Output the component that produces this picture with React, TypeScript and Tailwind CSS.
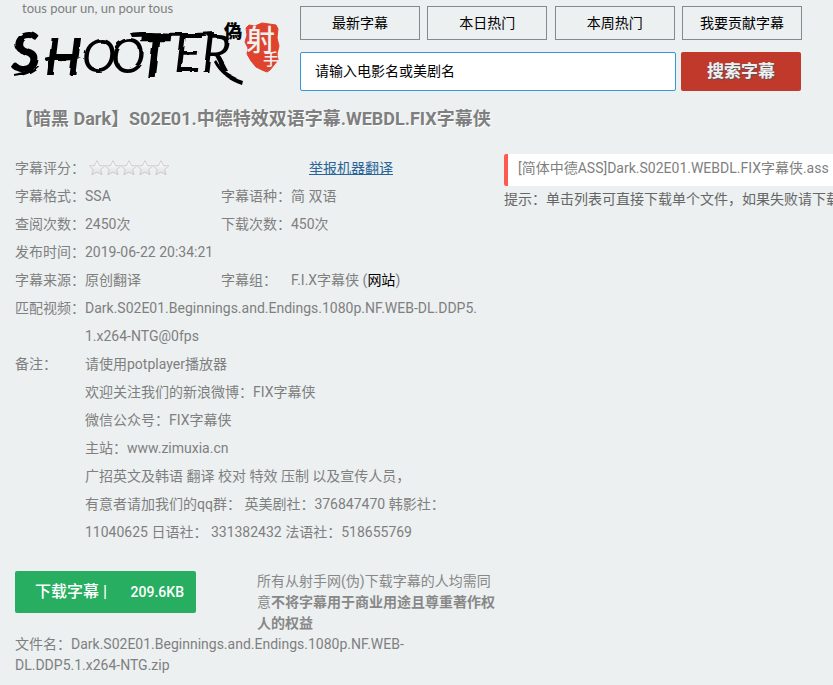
import type { ReactNode } from "react";

const navItems = ["最新字幕", "本日热门", "本周热门", "我要贡献字幕"];

const remarks = [
  "请使用potplayer播放器",
  "欢迎关注我们的新浪微博：FIX字幕侠",
  "微信公众号：FIX字幕侠",
  "主站：www.zimuxia.cn",
  "广招英文及韩语 翻译 校对 特效 压制 以及宣传人员，",
  "有意者请加我们的qq群： 英美剧社：376847470 韩影社：",
  "11040625 日语社： 331382432 法语社：518655769",
];

function Logo() {
  return (
    <svg
      viewBox="0 0 274 70"
      className="block h-[70px] w-[274px] overflow-visible"
      role="img"
      aria-label="SHOOTER"
    >
      <defs>
        <filter id="brush" x="-5%" y="-10%" width="110%" height="120%">
          <feTurbulence type="fractalNoise" baseFrequency="0.05" numOctaves="2" seed="7" result="n" />
          <feDisplacementMap in="SourceGraphic" in2="n" scale="5" />
        </filter>
      </defs>
      <g filter="url(#brush)" fill="#000">
        <g fontFamily="Lato, 'Liberation Sans', sans-serif" fontStyle="italic">
          <text x="3" y="54" fontSize="56" fontWeight="700">S</text>
          <text x="37" y="57" fontSize="52" fontWeight="700">H</text>
          <text x="74" y="54" fontSize="46" fontWeight="400">O</text>
          <text x="103" y="54" fontSize="46" fontWeight="400">O</text>
          <text x="130" y="60" fontSize="58" fontWeight="700">T</text>
          <text x="166" y="54" fontSize="52" fontWeight="400">E</text>
          <text x="193" y="54" fontSize="52" fontWeight="400">R</text>
        </g>
        <path d="M122 15 C140 12 168 17 206 14 L206 17 C180 20 150 18 124 19 Z" />
        <path d="M6 56 C16 54 26 51 34 45 C28 53 18 58 6 59 Z" />
        <path d="M36 40 C50 36 64 42 74 40 C64 46 50 42 38 43 Z" />
        <path d="M208 42 C214 52 222 58 234 62 L233 66 C220 62 211 54 206 44 Z" />
      </g>
      <text
        x="216"
        y="20"
        fontSize="18"
        fontWeight="900"
        fontFamily="'Noto Sans CJK TC', sans-serif"
        fill="#000"
      >
        偽
      </text>
      <path
        d="M238 10 L241 7 L247 8 L254 5 L261 6 L268 7 L270 11 L269 20 L271 28 L269 36 L270 42 L266 47 L262 52 L259 54 L254 52 L248 49 L243 43 L239 36 L240 30 L237 24 L239 17 Z"
        fill="#df432d"
        stroke="#df432d"
        strokeLinejoin="round"
      />
      <g fill="#ecf0f1" fontWeight="500" fontFamily="'Noto Sans CJK SC', sans-serif">
        <text x="238" y="33" fontSize="29">射</text>
        <text x="255" y="47" fontSize="16">手</text>
      </g>
    </svg>
  );
}

function Star() {
  return (
    <svg viewBox="0 0 16 16" className="size-4">
      <defs>
        <linearGradient id="starFill" x1="0" y1="0" x2="0" y2="1">
          <stop offset="0" stopColor="#ffffff" />
          <stop offset="1" stopColor="#dedede" />
        </linearGradient>
      </defs>
      <path
        d="M8 0.6 L10.4 5.6 L15.7 5.9 L11.7 9.5 L13.2 14.8 L8 12.2 L2.8 14.8 L4.3 9.5 L0.3 5.9 L5.6 5.6 Z"
        fill="url(#starFill)"
        stroke="#c0c0c0"
        strokeWidth="0.7"
      />
    </svg>
  );
}

function Field({ label, children }: { label: string; children: ReactNode }) {
  return (
    <div className="flex">
      <dt className="w-[70px] shrink-0 whitespace-nowrap">{label}：</dt>
      <dd className="min-w-0 whitespace-nowrap">{children}</dd>
    </div>
  );
}

export default function App() {
  return (
    <div className="min-h-screen overflow-hidden bg-[#ecf0f1] pb-2 font-[Roboto,'Noto_Sans_CJK_SC',sans-serif] text-sm text-[#7f7f7f]">
      <header className="flex">
        <div className="w-[300px] shrink-0 pl-2">
          <p className="mb-0.5 pl-[14px] font-[Lato,sans-serif] text-[13px] leading-4">
            tous pour un, un pour tous
          </p>
          <a href="#home" className="block">
            <Logo />
          </a>
        </div>
        <div className="w-[502px] pt-1.5">
          <nav className="flex justify-between">
            {navItems.map((item) => (
              <a
                key={item}
                href={"#" + item}
                className="flex h-[34px] w-[120px] items-center justify-center border border-[#7f8c8d] text-black"
              >
                {item}
              </a>
            ))}
          </nav>
          <form className="mt-3 flex w-[501px] gap-[5px]" onSubmit={(e) => e.preventDefault()}>
            <input
              type="text"
              aria-label="搜索字幕"
              defaultValue="请输入电影名或美剧名"
              className="h-[39px] min-w-0 flex-1 rounded-xs border border-[#3498db] bg-white px-3.5 pb-1 text-black"
            />
            <button
              type="submit"
              className="h-[39px] w-[120px] rounded-xs bg-[#c0392b] text-[17px] font-bold text-[#ecf0f1] [text-shadow:1px_1px_1px_#555]"
            >
              搜索字幕
            </button>
          </form>
        </div>
      </header>

      <h1 className="mt-3.5 pl-[15px] text-lg leading-7 font-bold [text-shadow:1px_1px_0_#fff]">
        【暗黑 Dark】S02E01.中德特效双语字幕.WEBDL.FIX字幕侠
      </h1>

      <main className="mt-[21px] flex pl-[15px]">
        <section className="w-[489px] shrink-0">
          <dl className="leading-7">
            <div className="flex">
              <div className="w-[294px]">
                <Field label="字幕评分">
                  <span className="flex h-7 items-center pl-1">
                    {[1, 2, 3, 4, 5].map((n) => (
                      <Star key={n} />
                    ))}
                  </span>
                </Field>
              </div>
              <a href="#report" className="text-[#2a6496] underline">
                举报机器翻译
              </a>
            </div>
            <div className="grid grid-cols-[206px_1fr]">
              <Field label="字幕格式">SSA</Field>
              <Field label="字幕语种">简 双语</Field>
              <Field label="查阅次数">2450次</Field>
              <Field label="下载次数">450次</Field>
            </div>
            <Field label="发布时间">2019-06-22 20:34:21</Field>
            <div className="grid grid-cols-[206px_1fr]">
              <Field label="字幕来源">原创翻译</Field>
              <Field label="字幕组">
                F.I.X字幕侠 (<a href="#site" className="text-black">网站</a>)
              </Field>
            </div>
            <Field label="匹配视频">
              Dark.S02E01.Beginnings.and.Endings.1080p.NF.WEB-DL.DDP5.
              <br />
              1.x264-NTG@0fps
            </Field>
            <Field label="备注">
              {remarks.map((line) => (
                <p key={line}>{line}</p>
              ))}
            </Field>
          </dl>

          <div className="mt-[25px] flex items-start">
            <button
              type="button"
              className="flex h-[42px] w-[181px] items-center rounded-xs bg-[#27ae60] pl-5 text-white"
            >
              <span className="text-base font-medium">下载字幕 |</span>
              <span className="ml-auto pr-3 font-medium">209.6KB</span>
            </button>
            <p className="ml-[61px] w-[240px] shrink-0 leading-[21px] text-[#888]">
              所有从射手网(伪)下载字幕的人均需同意
              <strong>不将字幕用于商业用途且尊重著作权人的权益</strong>
            </p>
          </div>
          <p className="w-[420px] leading-[21px]">
            文件名：<span className="whitespace-nowrap">Dark.S02E01.Beginnings.and.Endings.1080p.NF.WEB-</span>
            <br />
            DL.DDP5.1.x264-NTG.zip
          </p>
        </section>

        <aside className="min-w-0 flex-1 overflow-hidden whitespace-nowrap">
          <a
            href="#file"
            className="block h-8 rounded-l-xs border-l-4 border-[#ff5a52] bg-white pl-2.5 leading-7"
          >
            [简体中德ASS]Dark.S02E01.WEBDL.FIX字幕侠.ass
          </a>
          <p className="leading-[26px] text-[#666]">
            提示：单击列表可直接下载单个文件，如果失败请下载
          </p>
        </aside>
      </main>
    </div>
  );
}
